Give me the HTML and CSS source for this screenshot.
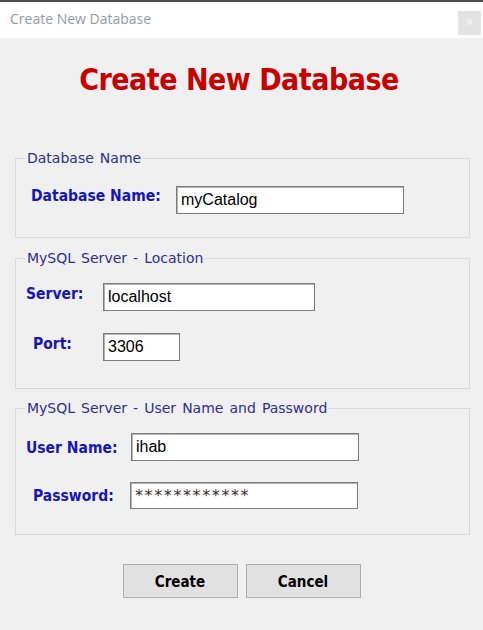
FILE: index.html
```html
<!DOCTYPE html>
<html lang="en">
<head>
<meta charset="utf-8">
<title>Create New Database</title>
<link rel="stylesheet" href="styles.css">
</head>
<body>
<div class="window">
  <div class="topstrip"></div>
  <div class="titlebar">
    <span class="title">Create New Database</span>
    <span class="close">&#x2715;</span>
  </div>
  <div class="content">
    <h1 class="heading">Create New Database</h1>

    <fieldset class="group group-db">
      <legend class="legend">Database Name</legend>
      <div class="row">
        <label class="label label-db">Database Name:</label>
        <input class="field field-db" type="text" value="myCatalog">
      </div>
    </fieldset>

    <fieldset class="group group-loc">
      <legend class="legend">MySQL Server - Location</legend>
      <div class="row">
        <label class="label label-server">Server:</label>
        <input class="field field-server" type="text" value="localhost">
      </div>
      <div class="row row-port">
        <label class="label label-port">Port:</label>
        <input class="field field-port" type="text" value="3306">
      </div>
    </fieldset>

    <fieldset class="group group-user">
      <legend class="legend">MySQL Server - User Name and Password</legend>
      <div class="row">
        <label class="label label-user">User Name:</label>
        <input class="field field-user" type="text" value="ihab">
      </div>
      <div class="row row-pass">
        <label class="label label-pass">Password:</label>
        <input class="field field-pass" type="text" value="************">
      </div>
    </fieldset>

    <div class="buttons">
      <button class="btn" type="button">Create</button>
      <button class="btn" type="button">Cancel</button>
    </div>
  </div>
</div>
</body>
</html>
```

FILE: styles.css
```css
html, body {
  margin: 0;
  padding: 0;
}
body {
  width: 483px;
  height: 630px;
  background: #f0f0f0;
  overflow: hidden;
}
.window {
  width: 483px;
  height: 630px;
  background: #f0f0f0;
}
.topstrip {
  height: 2px;
  background: #4b4b4b;
}
.titlebar {
  height: 36px;
  background: #ffffff;
  display: flex;
}
.title {
  font-family: "Open Sans", "Noto Sans", sans-serif;
  font-size: 14px;
  line-height: 34px;
  color: #959aa2;
  padding-left: 10px;
}
.close {
  margin-left: auto;
  margin-right: 2px;
  margin-top: 9px;
  width: 23px;
  height: 24px;
  background: #e3e3e3;
  color: #f6f6f6;
  font-family: "DejaVu Sans", sans-serif;
  font-size: 11px;
  line-height: 24px;
  text-align: center;
}
.content {
  display: flex;
  flex-direction: column;
  font-family: "DejaVu Sans Condensed", "DejaVu Sans", sans-serif;
}
.heading {
  margin: 24px 0 0 0;
  padding-right: 5px;
  height: 36px;
  font-size: 30px;
  letter-spacing: -0.5px;
  line-height: 36px;
  font-weight: bold;
  color: #c80000;
  text-align: center;
}
.group {
  margin: 0 0 0 15px;
  width: 455px;
  box-sizing: border-box;
  border: 1px solid #d8d8d8;
  padding: 0;
  min-width: 0;
}
.group-db {
  margin-top: 52px;
  padding-top: 20px;
  padding-bottom: 23px;
}
.group-loc {
  margin-top: 12px;
  padding-top: 17px;
  padding-bottom: 27px;
}
.group-user {
  margin-top: 11px;
  padding-top: 17px;
  padding-bottom: 25px;
}
.legend {
  font-family: "DejaVu Sans", sans-serif;
  font-size: 14px;
  word-spacing: 1.6px;
  line-height: 16px;
  color: #2e2e92;
  padding: 0 2px;
  margin-left: 9px;
}
.row {
  display: flex;
  align-items: flex-start;
}
.row-port {
  margin-top: 22px;
}
.row-pass {
  margin-top: 21px;
}
.label {
  font-size: 15.5px;
  line-height: 16px;
  font-weight: bold;
  color: #1616b8;
  box-sizing: border-box;
}
.label-db { padding-left: 15px; width: 160px; margin-top: 2px; }
.label-server { padding-left: 10px; width: 87px; margin-top: 3px; }
.label-port { padding-left: 17px; width: 87px; margin-top: 3px; }
.label-user { padding-left: 10px; width: 115px; margin-top: 7px; }
.label-pass { padding-left: 17px; width: 114px; margin-top: 6px; }
.field {
  box-sizing: border-box;
  height: 28px;
  margin: 0;
  border: 1px solid #7c7c7c;
  box-shadow: inset 1px 1px 0 #b4b4b4;
  background: #ffffff;
  padding: 0 4px;
  font-family: "Liberation Sans", Arial, sans-serif;
  font-size: 16px;
  color: #000000;
  outline: none;
}
.field-db { width: 228px; }
.field-server { width: 212px; }
.field-port { width: 77px; }
.field-user { width: 228px; }
.field-pass {
  width: 228px;
  height: 27px;
  font-family: "DejaVu Sans", sans-serif;
  letter-spacing: 1.6px;
  color: #3a3030;
}
.buttons {
  display: flex;
  justify-content: center;
  gap: 8px;
  margin-top: 29px;
}
.btn {
  width: 115px;
  height: 34px;
  box-sizing: border-box;
  background: #e1e1e1;
  border: 1px solid #adadad;
  border-radius: 0;
  font-family: "DejaVu Sans Condensed", "DejaVu Sans", sans-serif;
  font-size: 15px;
  font-weight: bold;
  color: #000000;
  padding: 2px 0 0 0;
}
```
